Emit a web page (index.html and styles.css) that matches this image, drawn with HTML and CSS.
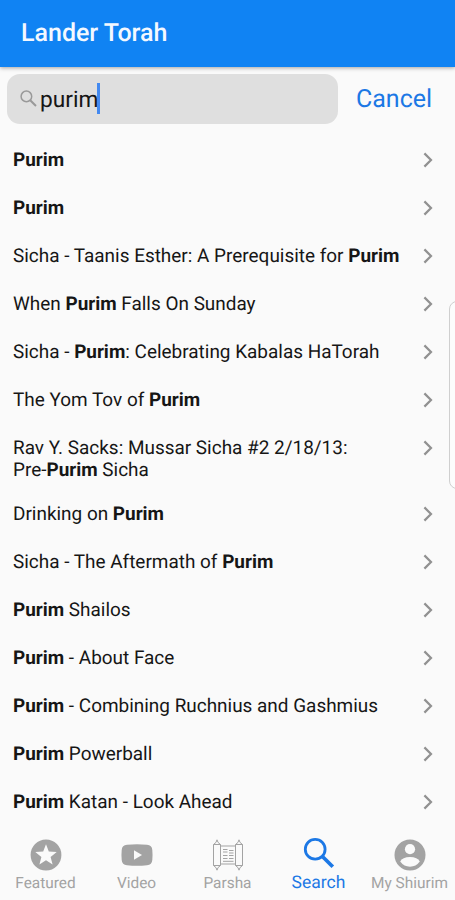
FILE: index.html
```html
<!DOCTYPE html>
<html lang="en">
<head>
<meta charset="utf-8">
<title>Lander Torah</title>
<link rel="stylesheet" href="styles.css">
</head>
<body>
<svg class="defs" width="0" height="0"><symbol id="chevron" viewBox="0 0 12 18"><path d="M2.4 2.4 9 9 2.4 15.6" fill="none" stroke="currentColor" stroke-width="2.2"/></symbol></svg>
<div class="app">
  <header class="topbar"><h1>Lander Torah</h1></header>
  <div class="searchbar">
    <div class="field">
      <svg class="glass" viewBox="0 0 17 17"><circle cx="6.4" cy="6.4" r="5.3" fill="none" stroke="currentColor" stroke-width="1.5"/><path d="M10.2 10.2 16 16" stroke="currentColor" stroke-width="2"/></svg>
      <span class="query">purim</span><span class="caret"></span>
    </div>
    <span class="cancel">Cancel</span>
  </div>
  <ul class="results">
    <li><span><b>Purim</b></span><svg><use href="#chevron"/></svg></li>
    <li><span><b>Purim</b></span><svg><use href="#chevron"/></svg></li>
    <li><span>Sicha - Taanis Esther: A Prerequisite for <b>Purim</b></span><svg><use href="#chevron"/></svg></li>
    <li><span>When <b>Purim</b> Falls On Sunday</span><svg><use href="#chevron"/></svg></li>
    <li><span>Sicha - <b>Purim</b>: Celebrating Kabalas HaTorah</span><svg><use href="#chevron"/></svg></li>
    <li><span>The Yom Tov of <b>Purim</b></span><svg><use href="#chevron"/></svg></li>
    <li class="two-line"><span>Rav Y. Sacks: Mussar Sicha #2 2/18/13:<br>Pre-<b>Purim</b> Sicha</span><svg><use href="#chevron"/></svg></li>
    <li><span>Drinking on <b>Purim</b></span><svg><use href="#chevron"/></svg></li>
    <li><span>Sicha - The Aftermath of <b>Purim</b></span><svg><use href="#chevron"/></svg></li>
    <li><span><b>Purim</b> Shailos</span><svg><use href="#chevron"/></svg></li>
    <li><span><b>Purim</b> - About Face</span><svg><use href="#chevron"/></svg></li>
    <li><span><b>Purim</b> - Combining Ruchnius and Gashmius</span><svg><use href="#chevron"/></svg></li>
    <li><span><b>Purim</b> Powerball</span><svg><use href="#chevron"/></svg></li>
    <li><span><b>Purim</b> Katan - Look Ahead</span><svg><use href="#chevron"/></svg></li>
  </ul>
  <nav class="tabs">
    <div class="tab"><svg viewBox="0 0 32 32"><circle cx="16" cy="16" r="15.4" fill="currentColor"/><path d="M16 5.2l2.8 7.4 7.9.4-6.1 5 2 7.6-6.6-4.3-6.6 4.3 2-7.6-6.1-5 7.9-.4z" fill="#fafafa"/></svg><span>Featured</span></div>
    <div class="tab"><svg viewBox="0 0 32 32"><path d="M6 5.8Q16 4.6 26 5.8Q31 6.2 31.3 11Q31.8 16 31.3 21Q31 25.8 26 26.2Q16 27.4 6 26.2Q1 25.8.7 21Q.2 16 .7 11Q1 6.2 6 5.8z" fill="currentColor"/><path d="M13 11.3v9.4l8-4.7z" fill="#fafafa"/></svg><span>Video</span></div>
    <div class="tab"><svg viewBox="0 0 32 32" fill="none" stroke="currentColor" stroke-width="1"><path d="M1.5 5.5h7v21h-7zM23.5 5.5h7v21h-7zM1.5 5.5 4 3.4 5 .8l1 2.6 2.5 2.1M1.5 26.5 4 28.6l1 2.6 1-2.6 2.5-2.1M23.5 5.5 26 3.4 27 .8l1 2.6 2.5 2.1M23.5 26.5 26 28.6l1 2.6 1-2.6 2.5-2.1M8.5 7h15M8.5 25h15M11 10.5h4.5M17 11.5h4.5M11 13h4.5M17 14h4.5M11 16.5h4.5M17 16.5h4.5M11 19.5h4.5M17 19.5h4.5M11 22.3h10.5"/></svg><span>Parsha</span></div>
    <div class="tab active"><svg viewBox="0 0 32 32" fill="none" stroke="currentColor"><circle cx="12.2" cy="12.2" r="9.9" stroke-width="2.8"/><path d="M19.7 19.7 29.8 29.8" stroke-width="3.7"/></svg><span>Search</span></div>
    <div class="tab"><svg viewBox="0 0 32 32"><circle cx="16" cy="16" r="15.5" fill="currentColor"/><circle cx="16" cy="10.2" r="5.1" fill="#fafafa"/><path d="M6.2 22.6Q8.4 18 16 18T25.8 22.6Q22 27.8 16 27.8T6.2 22.6z" fill="#fafafa"/></svg><span>My Shiurim</span></div>
  </nav>
  <div class="edge-handle"></div>
</div>
</body>
</html>
```

FILE: styles.css
```css
* { box-sizing: border-box; }
body { margin: 0; background: #fafafa; color: #161616; font-family: Roboto, sans-serif; text-rendering: geometricPrecision; }
.defs { position: absolute; }
.app { position: relative; display: flex; flex-direction: column; width: 455px; height: 900px; overflow: hidden; }
.topbar { flex: none; height: 67px; padding-left: 21px; display: flex; align-items: center; background: #1083f3; color: #f3f8ff; box-shadow: 0 1px 4px rgba(0,0,0,.35); }
.topbar h1 { margin: 0; font-size: 25px; font-weight: 500; line-height: 30px; }
.searchbar { flex: none; display: flex; align-items: center; height: 69px; padding: 7px 0 12px 7px; }
.field { display: flex; align-items: center; width: 331px; height: 50px; padding-left: 13px; border-radius: 13px; background: #dfdfdf; }
.glass { width: 17px; height: 17px; margin: -2px 3px 0 0; color: #999; }
.query { padding-top: 2px; font-size: 22.7px; line-height: 30px; }
.caret { width: 3px; height: 31px; margin: -2px 0 0 -1px; background: #4389f0; }
.cancel { margin-left: 18px; padding-top: 2px; font-size: 25px; line-height: 30px; color: #1c78e5; }
.results { flex: none; list-style: none; margin: 0; padding: 0; }
.results li { display: flex; justify-content: space-between; align-items: flex-start; padding: 13px 21px 13px 13px; font-size: 18.95px; line-height: 22px; white-space: nowrap; }
.results .two-line { padding-bottom: 9px; }
.results svg { flex: none; width: 12px; height: 18px; margin-top: 2px; color: #919191; }
.results b { font-weight: 700; }
.tabs { flex: none; display: grid; grid-template-columns: repeat(5, 1fr); height: 78px; padding-top: 13px; }
.tab { display: flex; flex-direction: column; align-items: center; color: #a3a3a3; font-size: 15.4px; line-height: 20px; white-space: nowrap; }
.tab svg { width: 32px; height: 32px; margin-bottom: 2px; }
.tab.active { margin-top: -2px; color: #1c78e5; font-size: 17.5px; line-height: 22px; }
.tab.active svg { margin-bottom: 3px; }
.edge-handle { position: absolute; left: 449px; top: 301px; width: 20px; height: 188px; border: 1px solid #cfcfcf; border-radius: 8px; background: #fcfcfc; }
```
